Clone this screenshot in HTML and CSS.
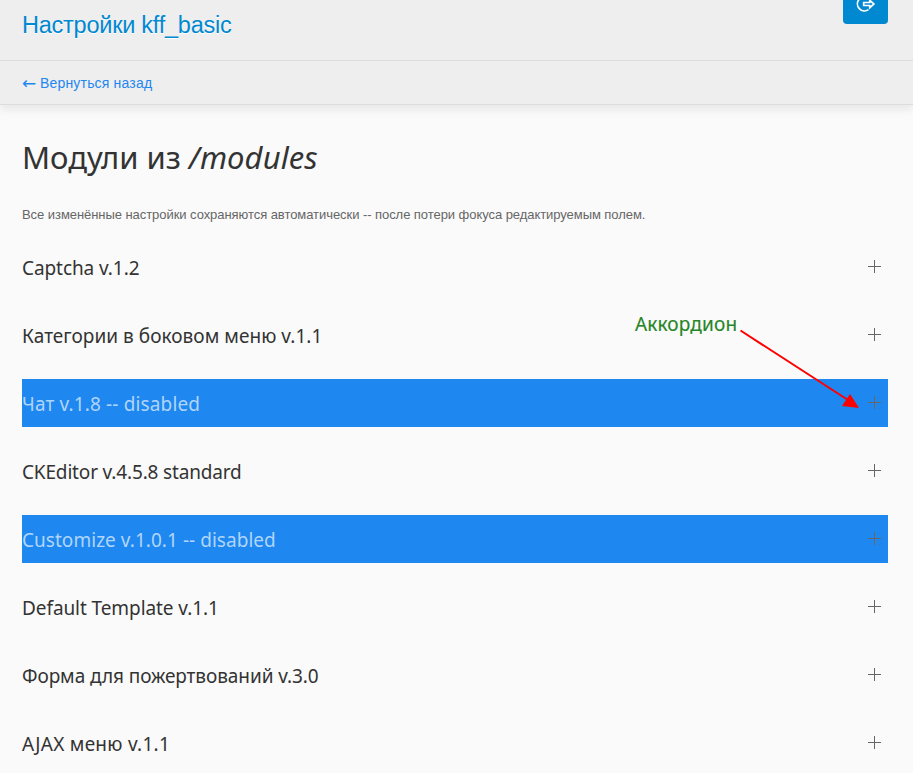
FILE: index.html
```html
<!DOCTYPE html>
<html lang="ru">
<head>
<meta charset="utf-8">
<title>Настройки kff_basic</title>
<link rel="stylesheet" href="styles.css">
</head>
<body>
<header class="topbar">
  <h1 class="brand">Настройки kff_basic</h1>
  <a class="logout" href="#" aria-label="Выход">
    <svg width="20" height="14" viewBox="0 0 20 14" fill="none" stroke="#fff" stroke-width="1.7"><path d="M12 -2.2A7 7 0 1 0 12.400 9.600M7.700 2.500h6V.2L17.900 4l-4.200 3.800V5.500h-6z"/></svg>
  </a>
</header>
<nav class="subbar"><a href="#"><span class="back">←</span>Вернуться назад</a></nav>
<main class="content">
  <h2 class="title">Модули из <em>/modules</em></h2>
  <p class="note">Все изменённые настройки сохраняются автоматически -- после потери фокуса редактируемым полем.</p>
  <ul class="accordion">
    <li class="item"><span class="tight">Captcha v.1.2</span><i class="plus"></i></li>
    <li class="item"><span class="loose">Категории в боковом меню v.1.1</span><i class="plus"></i></li>
    <li class="item off"><span class="looser">Чат v.1.8 -- disabled</span><i class="plus"></i></li>
    <li class="item"><span class="tighter">CKEditor v.4.5.8 standard</span><i class="plus"></i></li>
    <li class="item off"><span class="loose">Customize v.1.0.1 -- disabled</span><i class="plus"></i></li>
    <li class="item"><span class="tight">Default Template v.1.1</span><i class="plus"></i></li>
    <li class="item"><span class="tight">Форма для пожертвований v.3.0</span><i class="plus"></i></li>
    <li class="item"><span class="loosest">AJAX меню v.1.1</span><i class="plus"></i></li>
  </ul>
</main>
<div class="callout">Аккордион</div>
<svg class="arrow" width="124" height="84" viewBox="0 0 124 84"><path d="M4.500 5.500L112 75" stroke="#f00" stroke-width="2"/><path d="M123 83L106 81L114 69z" fill="#f00"/></svg>
</body>
</html>
```
FILE: styles.css
```css
* { box-sizing: border-box; }
body { margin: 0; height: 773px; overflow: hidden; background: #fafafa; color: #333; font-family: "Noto Sans", sans-serif; position: relative; }
h1, h2, p, ul { margin: 0; padding: 0; font-weight: 400; }
a { color: #1e87f0; text-decoration: none; }
.topbar { height: 61px; background: #eee; border-bottom: 1px solid #ddd; padding: 0 25px 0 22px; display: flex; justify-content: space-between; align-items: flex-start; }
.brand { font: 23.5px/28px "Liberation Sans", sans-serif; letter-spacing: -.24px; color: #0088d1; padding-top: 11px; text-shadow: 0 1px 0 #fff; }
.logout { width: 45px; height: 24px; background: #0088d1; border-radius: 0 0 4px 4px; display: flex; justify-content: center; }
.subbar { height: 44px; background: #eee; border-bottom: 1px solid #ddd; box-shadow: 0 5px 8px rgba(0,0,0,.07); clip-path: inset(0 0 -16px 0); padding: 0 22px; font: 14px/44px "Liberation Sans", sans-serif; letter-spacing: .18px; }
.subbar a { display: flex; }
.back { width: 18px; font: 17px/44px "DejaVu Sans", sans-serif; letter-spacing: 0; }
.content { padding: 30px 25px 0 22px; }
.title { font-size: 31px; line-height: 44px; letter-spacing: -.04px; }
.title em { letter-spacing: .06px; }
.note { font: 13px/20px "Liberation Sans", sans-serif; letter-spacing: -.058px; color: #666; padding-top: 26px; }
.accordion { list-style: none; padding-top: 18px; display: flex; flex-direction: column; gap: 20px; }
.item { height: 48px; padding: 2px 7px 0 0; display: flex; justify-content: space-between; align-items: center; font-size: 19px; white-space: nowrap; }
.off { background: #1e87f0; color: #b0d5fa; }
.tight { letter-spacing: -.08px; }
.tighter { letter-spacing: -.16px; }
.loose { letter-spacing: .04px; }
.looser { letter-spacing: .14px; }
.loosest { letter-spacing: .26px; }
.plus { width: 13px; height: 13px; background: linear-gradient(#666,#666) center/1px 100% no-repeat, linear-gradient(#666,#666) center/100% 1px no-repeat; margin-top: -3px; }
.callout { position: absolute; left: 635px; top: 310px; font-size: 19px; line-height: 28px; letter-spacing: .15px; color: #268526; -webkit-text-stroke: .15px #268526; }
.arrow { position: absolute; left: 736px; top: 325px; }
```
